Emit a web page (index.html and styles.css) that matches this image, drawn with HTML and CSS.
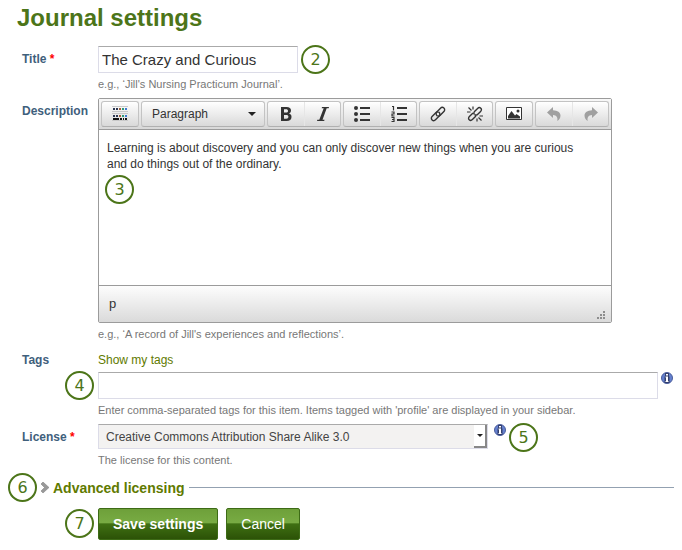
FILE: index.html
```html
<!DOCTYPE html>
<html lang="en">
<head>
    <meta charset="UTF-8">
    <meta name="viewport" content="width=device-width, initial-scale=1.0">
    <title>Journal settings</title>
    <link rel="stylesheet" href="styles.css">
</head>
<body>
    <h1>Journal settings</h1>
    <form id="journalForm" action="#" method="post">
        <div class="row title-row">
            <label for="title">Title <span class="required">*</span></label>
            <div class="field">
                <div class="control">
                    <input type="text" id="title" name="title" value="The Crazy and Curious" required>
                    <span class="step">2</span>
                </div>
                <p class="hint">e.g., ‘Jill's Nursing Practicum Journal’.</p>
            </div>
        </div>

        <div class="row description-row">
            <label for="description">Description</label>
            <div class="field">
                <div class="editor">
                    <div class="toolbar">
                        <div class="group">
                            <button type="button" aria-label="Toggle toolbar">
                                <svg width="16" height="16" viewBox="0 0 16 16">
                                    <path d="M0 .5h16M0 5.500h16M0 7.500h16M0 14.500h16" stroke="#c9c9c9"/>
                                    <path d="M1 3h14M1 10h14" stroke="#2c3650" stroke-width="2" stroke-dasharray="2 1"/>
                                    <path d="M7 3h2M7 10h2" stroke="#a0603c" stroke-width="2"/>
                                    <path d="M10 3h2M10 10h2" stroke="#2f9a78" stroke-width="2"/>
                                    <path d="M13 3h2M13 10h2" stroke="#3f78d0" stroke-width="2"/>
                                    <path d="M1 13h6M8 13h2M11 13h1M13 13h2" stroke="#111" stroke-width="2"/>
                                </svg>
                            </button>
                        </div>
                        <div class="group group-format">
                            <button type="button" class="format">Paragraph <span class="caret"></span></button>
                        </div>
                        <div class="group">
                            <button type="button" aria-label="Bold">
                                <svg width="16" height="16" viewBox="0 0 16 16"><path fill="#333" fill-rule="evenodd" d="M3 1h5.500c3 0 4.500 1.300 4.500 3.600 0 1.500-.8 2.500-2 3 1.600.4 2.500 1.600 2.500 3.300 0 2.600-1.800 4.100-4.800 4.100H3zM6 3.300v3.300h2c1.300 0 2-.6 2-1.700s-.7-1.600-2-1.600zM6 8.900v3.800h2.300c1.400 0 2.100-.6 2.100-1.900s-.8-1.900-2.100-1.900z"/></svg>
                            </button>
                            <button type="button" aria-label="Italic">
                                <svg width="16" height="16" viewBox="0 0 16 16"><path fill="#333" d="M7 1h7l-.3 1.200h-2L7.500 13.800h2L9.200 15H2l.3-1.200h2L8.700 2.200h-2z"/></svg>
                            </button>
                        </div>
                        <div class="group">
                            <button type="button" aria-label="Bullet list">
                                <svg width="16" height="16" viewBox="0 0 16 16"><path stroke="#333" stroke-width="2" d="M6 2h10M6 8h10M6 14h10"/><g fill="#333"><circle cx="2" cy="2" r="2"/><circle cx="2" cy="8" r="2"/><circle cx="2" cy="14" r="2"/></g></svg>
                            </button>
                            <button type="button" aria-label="Numbered list">
                                <svg width="16" height="16" viewBox="0 0 16 16"><path stroke="#333" stroke-width="2" d="M6 2h10M6 8h10M6 14h10"/><path fill="none" stroke="#333" stroke-width="1.200" d="M1 .5h1.500V4.500M.5 6h2.500v2h-2v2h2.500M.5 11.500h2.500v4H.5M1 13.500h2"/></svg>
                            </button>
                        </div>
                        <div class="group">
                            <button type="button" aria-label="Insert link">
                                <svg width="16" height="16" viewBox="0 0 16 16"><g fill="none" stroke="#333" stroke-width="1.400" stroke-linecap="round"><path d="M7.200 9.800c-1.300-.9-1.400-2.700-.4-3.800l3.700-3.800c1-1 2.400-1 3.400-.1s1 2.400 0 3.400L10.200 9.300c-.4.4-1 .7-1.600.7"/><path d="M8.800 6.200c1.300.9 1.400 2.700.4 3.800l-3.700 3.800c-1 1-2.400 1-3.400.1s-1-2.400 0-3.400l3.700-3.800c.4-.4 1-.7 1.600-.7"/></g></svg>
                            </button>
                            <button type="button" aria-label="Remove link">
                                <svg width="16" height="16" viewBox="0 0 16 16"><g fill="none" stroke="#333" stroke-width="1.400"><path d="M7 6l3.600-3.600c1-1 2.300-1 3.200-.2s.8 2.200-.2 3.200L10 9M9 10l-3.600 3.600c-1 1-2.300 1-3.200.2s-.8-2.200.2-3.200L6 7M7 6v2.500M10 9H7.500"/><path stroke-width="1.200" d="M1.500 1.500l3 3M6 .5v3M0 6h3.500M11.500 11.500l3 3M10 12.500v3M12.500 10H16"/></g></svg>
                            </button>
                        </div>
                        <div class="group">
                            <button type="button" aria-label="Insert image">
                                <svg width="16" height="16" viewBox="0 0 16 16"><path fill="#fff" stroke="#333" d="M.5 1.500h15v12H.5z"/><path fill="#333" d="M2 12.500V10l3.500-5L9 9.500 10.500 8l3.500 2.500v2z"/><circle cx="12" cy="5" r="1.500" fill="#333"/></svg>
                            </button>
                        </div>
                        <div class="group">
                            <button type="button" aria-label="Undo" disabled>
                                <svg width="16" height="16" viewBox="0 0 16 16"><path fill="#a0a0a0" d="M7 1v3.200c4.500.1 7.500 2.300 7.500 5.300 0 2.500-1.300 4.300-3.200 5.500.6-3.700-.7-5.700-4.300-5.900V12L1 6.500z"/></svg>
                            </button>
                            <button type="button" aria-label="Redo" disabled>
                                <svg width="16" height="16" viewBox="0 0 16 16"><path fill="#a0a0a0" d="M9 1v3.200C4.500 4.300 1.500 6.500 1.500 9.500c0 2.500 1.300 4.300 3.200 5.500-.6-3.700.7-5.700 4.300-5.900V12l6-5.500z"/></svg>
                            </button>
                        </div>
                    </div>
                    <div class="content">
                        <div id="description" contenteditable="true" role="textbox" aria-label="Description">Learning is about discovery and you can only discover new things when you are curious and do things out of the ordinary.</div>
                        <span class="step">3</span>
                    </div>
                    <div class="statusbar">
                        <span>p</span>
                        <svg class="grip" width="8" height="8" viewBox="0 0 8 8"><path fill="#8d8d8d" d="M6 0h2v2H6zM6 3h2v2H6zM3 3h2v2H3zM6 6h2v2H6zM3 6h2v2H3zM0 6h2v2H0z"/></svg>
                    </div>
                </div>
                <p class="hint">e.g., ‘A record of Jill's experiences and reflections’.</p>
            </div>
        </div>

        <div class="row tags-row">
            <label for="tags">Tags</label>
            <div class="field">
                <a href="#">Show my tags</a>
                <div class="control">
                    <span class="step step-before">4</span>
                    <input type="text" id="tags" name="tags">
                    <svg class="info" width="12" height="12" viewBox="0 0 12 12"><circle cx="6" cy="6" r="5.500" fill="#6480cf" stroke="#4b5d9b"/><path fill="#34406f" d="M4 1h4v3.500h.5V11h-5V4.500H4z"/><path fill="#fff" d="M5 2h2v1.500H5zM4.500 4.500H7V9h.5v1h-3V9H5V5.500h-.5z"/></svg>
                </div>
                <p class="hint">Enter comma-separated tags for this item. Items tagged with 'profile' are displayed in your sidebar.</p>
            </div>
        </div>

        <div class="row license-row">
            <label for="license">License <span class="required">*</span></label>
            <div class="field">
                <div class="control">
                    <div class="select">
                        <select id="license" name="license" required>
                            <option>Creative Commons Attribution Share Alike 3.0</option>
                        </select>
                        <span class="arrow"><span class="caret"></span></span>
                    </div>
                    <svg class="info" width="12" height="12" viewBox="0 0 12 12"><circle cx="6" cy="6" r="5.500" fill="#6480cf" stroke="#4b5d9b"/><path fill="#34406f" d="M4 1h4v3.500h.5V11h-5V4.500H4z"/><path fill="#fff" d="M5 2h2v1.500H5zM4.500 4.500H7V9h.5v1h-3V9H5V5.500h-.5z"/></svg>
                    <span class="step">5</span>
                </div>
                <p class="hint">The license for this content.</p>
            </div>
        </div>

        <div class="advanced">
            <span class="step">6</span>
            <svg width="10" height="12" viewBox="0 0 10 12"><path fill="#999" stroke="#777" stroke-width=".5" d="M1 2l2-2 6 5.500-6 5.500-2-2 3.500-3.500z"/></svg>
            <a href="#">Advanced licensing</a>
        </div>

        <div class="actions">
            <span class="step step-before">7</span>
            <button type="submit" class="primary">Save settings</button>
            <button type="button">Cancel</button>
        </div>
    </form>
</body>
</html>
```
FILE: styles.css
```css
* {
    box-sizing: border-box;
}
body {
    margin: 0;
    padding: 4px 8px 10px;
    background-color: #fff;
    color: #333;
    font-family: "Liberation Sans", Arial, sans-serif;
    font-size: 12px;
    line-height: 16px;
}
h1 {
    margin: 0 0 14px 9px;
    color: #4c7519;
    font-size: 24px;
    line-height: 28px;
}
a {
    color: #5f7a00;
    text-decoration: none;
}
input, select, button {
    font-family: inherit;
}

/* form rows */
.row {
    display: grid;
    grid-template-columns: 76px 1fr;
    padding-left: 14px;
}
.row label {
    color: #3f607c;
    font-weight: bold;
}
.required {
    color: #f00;
}
.control {
    display: flex;
    position: relative;
}
.hint {
    margin: 0;
    color: #777;
    font-size: 11px;
    line-height: 16px;
}
.title-row label {
    padding-top: 5px;
}
.title-row .control {
    align-items: center;
    gap: 3px;
    margin-bottom: 3px;
}
.description-row {
    margin-top: 6px;
}
.description-row label {
    padding-top: 5px;
}
.description-row .hint {
    margin-top: 3px;
}
.tags-row {
    margin-top: 10px;
}
.tags-row .hint {
    margin-top: 3px;
}
.license-row {
    margin-top: 6px;
}
.license-row label {
    padding-top: 5px;
}
.license-row .hint {
    margin-top: 3px;
}

input[type="text"] {
    width: 200px;
    height: 27px;
    padding: 0 3px;
    border: 1px solid #dcdce8;
    border-top-color: #aaa;
    background-color: #fff;
    color: #333;
    font-size: 15px;
}
#tags {
    flex: 1;
    min-width: 0;
}
.tags-row .control {
    margin-top: 4px;
    padding-right: 1px;
}
.info {
    flex: none;
    margin-left: 3px;
}
.license-row .info {
    margin-left: 6px;
}

/* numbered markers */
.step {
    flex: none;
    display: block;
    width: 29px;
    height: 29px;
    border: 2px solid #4c7519;
    border-radius: 50%;
    background-color: #fff;
    color: #4c7519;
    font-family: "DejaVu Sans", sans-serif;
    font-size: 16px;
    font-weight: normal;
    line-height: 25px;
    text-align: center;
}
.step-before {
    position: absolute;
    right: 100%;
    top: -1px;
    margin-right: 4px;
}
.title-row .step {
    margin-top: -1px;
    margin-bottom: -1px;
}
.license-row .step {
    margin: -1px 0 -3px 3px;
}

/* editor */
.editor {
    max-width: 514px;
    border: 1px solid #9b9b9b;
    border-radius: 2px;
}
.toolbar {
    display: flex;
    gap: 2px;
    padding: 2px;
    border-bottom: 1px solid #9b9b9b;
    background: linear-gradient(#f8f8f8, #d8d8d8);
}
.group {
    display: flex;
    flex: 0 0 auto;
    border: 1px solid #c3c3c3;
    border-bottom-color: #b0b0b0;
    border-radius: 3px;
    background: linear-gradient(#fff, #d9d9d9);
}
.group button {
    display: flex;
    align-items: center;
    justify-content: center;
    width: 36px;
    height: 24px;
    padding: 0;
    border: 0;
    background: none;
}
.group button + button {
    border-left: 1px solid #e6e6e6;
}
.group-format {
    flex: 0 1 124px;
}
.group button.format {
    justify-content: space-between;
    width: 100%;
    padding: 0 8px 0 10px;
    color: #333;
    font-size: 12px;
}
.caret {
    border: 4px solid transparent;
    border-top-color: #222;
    border-bottom: 0;
}
.content {
    min-height: 155px;
    padding: 10px 20px 10px 8px;
}
#description {
    margin-bottom: 3px;
    outline: none;
}
.content .step {
    margin-left: -2px;
}
.statusbar {
    display: flex;
    justify-content: space-between;
    align-items: center;
    height: 37px;
    padding: 0 6px 0 10px;
    border-top: 1px solid #9b9b9b;
    background: linear-gradient(#fdfdfd, #dadada);
    font-size: 13px;
}
.grip {
    align-self: flex-end;
    margin-bottom: 3px;
}

/* license drop-down */
.select {
    display: flex;
    position: relative;
    flex: 0 1 390px;
}
.select select {
    width: 100%;
    height: 25px;
    padding: 0 20px 0 7px;
    border: 1px solid #dcdce8;
    border-top-color: #aaa;
    border-radius: 0;
    background-color: #f3f2f1;
    color: #444;
    font-size: 12px;
    appearance: none;
}
.arrow {
    display: flex;
    position: absolute;
    top: 1px;
    right: 1px;
    bottom: 1px;
    align-items: center;
    justify-content: center;
    width: 13px;
    border-right: 2px solid #888;
    border-bottom: 2px solid #888;
    background-color: #fff;
    pointer-events: none;
}
.arrow .caret {
    border-width: 3px;
    border-bottom: 0;
}

/* advanced licensing */
.advanced {
    display: flex;
    align-items: center;
    gap: 3px;
    margin-top: 5px;
    font-size: 14px;
    font-weight: bold;
}
.advanced::after {
    content: "";
    flex: 1;
    height: 1px;
    margin-left: 2px;
    background-color: #93a1b1;
}

/* buttons */
.actions {
    display: flex;
    position: relative;
    gap: 8px;
    margin: 6px 0 0 90px;
}
.actions button {
    height: 32px;
    padding: 0 14px;
    border: 1px solid #3d6b16;
    border-radius: 2px;
    background: linear-gradient(#6ea03a, #78ab43 45%, #3f7013 50%, #2c5207);
    color: #fff;
    font-size: 14px;
}
.actions .primary {
    font-weight: bold;
}
.actions .step-before {
    top: 1px;
}
```
